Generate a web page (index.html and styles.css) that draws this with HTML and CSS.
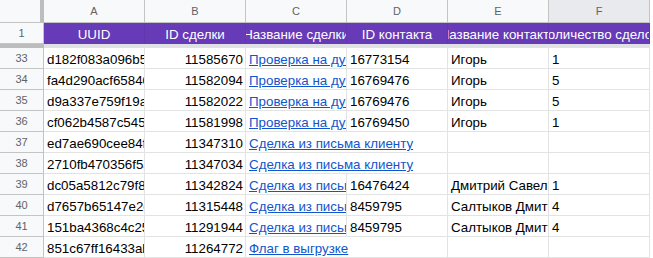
FILE: index.html
```html
<!DOCTYPE html>
<html lang="ru">
<head>
<meta charset="utf-8">
<title>Sheet</title>
<link rel="stylesheet" href="styles.css">
</head>
<body>
<div class="sheet">
  <div class="corner"></div>
  <div class="colhead">A</div>
  <div class="colhead">B</div>
  <div class="colhead">C</div>
  <div class="colhead">D</div>
  <div class="colhead">E</div>
  <div class="colhead active">F</div>

  <div class="rowhead">1</div>
  <div class="hcell"><span>UUID</span></div>
  <div class="hcell"><span>ID сделки</span></div>
  <div class="hcell"><span>Название сделки</span></div>
  <div class="hcell"><span>ID контакта</span></div>
  <div class="hcell"><span>Название контакта</span></div>
  <div class="hcell"><span>Количество сделок</span></div>

  <div class="band-head"></div>
  <div class="band"></div>

  <div class="rowhead">33</div>
  <div class="cell"><span>d182f083a096b5e1c4a7f2</span></div>
  <div class="cell num"><span>11585670</span></div>
  <div class="cell"><a class="link" href="#">Проверка на дубли</a></div>
  <div class="cell"><span>16773154</span></div>
  <div class="cell"><span>Игорь</span></div>
  <div class="cell"><span>1</span></div>

  <div class="rowhead">34</div>
  <div class="cell"><span>fa4d290acf65840b7e3d91</span></div>
  <div class="cell num"><span>11582094</span></div>
  <div class="cell"><a class="link" href="#">Проверка на дубли</a></div>
  <div class="cell"><span>16769476</span></div>
  <div class="cell"><span>Игорь</span></div>
  <div class="cell"><span>5</span></div>

  <div class="rowhead">35</div>
  <div class="cell"><span>d9a337e759f19ac2d0184b</span></div>
  <div class="cell num"><span>11582022</span></div>
  <div class="cell"><a class="link" href="#">Проверка на дубли</a></div>
  <div class="cell"><span>16769476</span></div>
  <div class="cell"><span>Игорь</span></div>
  <div class="cell"><span>5</span></div>

  <div class="rowhead">36</div>
  <div class="cell"><span>cf062b4587c5459a1e03d7</span></div>
  <div class="cell num"><span>11581998</span></div>
  <div class="cell"><a class="link" href="#">Проверка на дубли</a></div>
  <div class="cell"><span>16769450</span></div>
  <div class="cell"><span>Игорь</span></div>
  <div class="cell"><span>1</span></div>

  <div class="rowhead">37</div>
  <div class="cell"><span>ed7ae690cee84f1b9a2c65</span></div>
  <div class="cell num"><span>11347310</span></div>
  <div class="cell wide"><a class="link" href="#">Сделка из письма клиенту</a></div>
  <div class="cell"></div>
  <div class="cell"></div>

  <div class="rowhead">38</div>
  <div class="cell"><span>2710fb470356f5a8c3e91d</span></div>
  <div class="cell num"><span>11347034</span></div>
  <div class="cell wide"><a class="link" href="#">Сделка из письма клиенту</a></div>
  <div class="cell"></div>
  <div class="cell"></div>

  <div class="rowhead">39</div>
  <div class="cell"><span>dc05a5812c79f8e4b1a067</span></div>
  <div class="cell num"><span>11342824</span></div>
  <div class="cell"><a class="link" href="#">Сделка из письма клиенту</a></div>
  <div class="cell"><span>16476424</span></div>
  <div class="cell"><span>Дмитрий Савельев</span></div>
  <div class="cell"><span>1</span></div>

  <div class="rowhead">40</div>
  <div class="cell"><span>d7657b65147e2c9f0a3b84</span></div>
  <div class="cell num"><span>11315448</span></div>
  <div class="cell"><a class="link" href="#">Сделка из письма клиенту</a></div>
  <div class="cell"><span>8459795</span></div>
  <div class="cell"><span>Салтыков Дмитрий</span></div>
  <div class="cell"><span>4</span></div>

  <div class="rowhead">41</div>
  <div class="cell"><span>151ba4368c4c25d7e9f013</span></div>
  <div class="cell num"><span>11291944</span></div>
  <div class="cell"><a class="link" href="#">Сделка из письма клиенту</a></div>
  <div class="cell"><span>8459795</span></div>
  <div class="cell"><span>Салтыков Дмитрий</span></div>
  <div class="cell"><span>4</span></div>

  <div class="rowhead">42</div>
  <div class="cell"><span>851c67ff16433ab2e5d790</span></div>
  <div class="cell num"><span>11264772</span></div>
  <div class="cell wide"><a class="link" href="#">Флаг в выгрузке</a></div>
  <div class="cell"></div>
  <div class="cell"></div>
</div>
</body>
</html>
```

FILE: styles.css
```css
html, body {
  margin: 0;
  padding: 0;
  background: #ffffff;
}

body {
  font-family: "Liberation Sans", Arial, sans-serif;
  font-size: 13.33px;
  color: #000000;
  overflow: hidden;
}

.sheet {
  display: grid;
  grid-template-columns: 44px repeat(6, 101px);
  grid-template-rows: 23px 21px 4px;
  grid-auto-rows: 21px;
  width: 650px;
}

.corner {
  background: #f8f9fa;
  border-right: 4px solid #bdbdbd;
  border-bottom: 1px solid #c4c4c4;
  box-sizing: border-box;
}

.colhead {
  box-sizing: border-box;
  background: #f8f9fa;
  border-right: 1px solid #c4c4c4;
  border-bottom: 1px solid #c4c4c4;
  color: #5f6368;
  font-size: 11px;
  display: flex;
  align-items: center;
  justify-content: center;
}

.colhead.active {
  background: #e8eaed;
}

.rowhead {
  box-sizing: border-box;
  background: #f8f9fa;
  border-right: 1px solid #c4c4c4;
  border-bottom: 1px solid #c4c4c4;
  color: #5f6368;
  font-size: 11px;
  display: flex;
  align-items: center;
  justify-content: center;
}

.hcell {
  box-sizing: border-box;
  background: #673ab7;
  border-right: 1px solid #6236ad;
  border-bottom: 1px solid #673ab7;
  color: #ffffff;
  display: flex;
  align-items: flex-end;
  justify-content: center;
  overflow: hidden;
  line-height: 16px;
  white-space: nowrap;
}

.hcell span {
  flex: none;
}

.band-head {
  background: #bdbdbd;
}

.band {
  grid-column: 2 / -1;
  background: #dfe1e5;
}

.cell {
  box-sizing: border-box;
  background: #ffffff;
  border-right: 1px solid #e2e3e3;
  border-bottom: 1px solid #e2e3e3;
  display: flex;
  align-items: flex-end;
  justify-content: flex-start;
  overflow: hidden;
  white-space: nowrap;
  line-height: 16px;
  padding: 0 2px 0 3px;
}

.cell span,
.cell a {
  flex: none;
}

.cell.num {
  justify-content: flex-end;
}

.cell.wide {
  grid-column: span 2;
}

.link {
  color: #1155cc;
  text-decoration: underline;
}
```
